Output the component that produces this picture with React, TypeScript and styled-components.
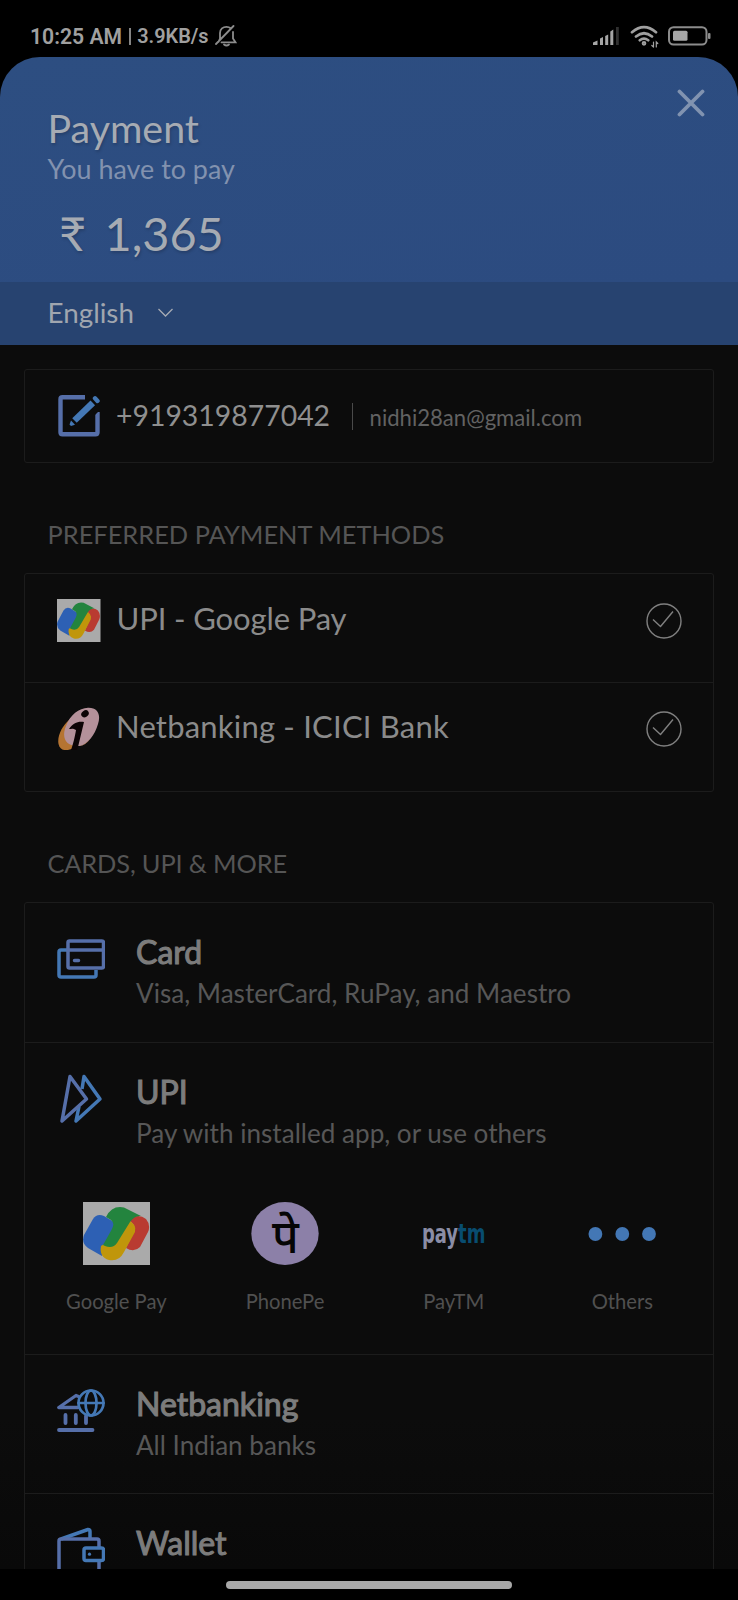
import React from "react";
import styled, { createGlobalStyle } from "styled-components";

const Global = createGlobalStyle`
  * { box-sizing: border-box; }
  body { margin: 0; background: #000; font-family: Lato, "Liberation Sans", sans-serif; }
  svg { display: block; flex: none; }
`;

const Screen = styled.div`
  width: 738px;
  height: 1600px;
  display: flex;
  flex-direction: column;
  overflow: hidden;
  background: #000;
`;

const StatusBar = styled.div`
  height: 57px;
  flex: none;
  display: flex;
  align-items: center;
  justify-content: space-between;
  padding: 15px 27px 0 30px;
  font-family: Roboto, sans-serif;
  font-weight: 600;
  color: #a0a0a0;
`;

const StatusGroup = styled.div<{ $gap: number }>`
  display: flex;
  align-items: center;
  gap: ${(p) => p.$gap}px;
`;

const StatusText = styled.span<{ $size: number }>`
  font-size: ${(p) => p.$size}px;
  white-space: nowrap;
`;

const StatusRule = styled.span`
  width: 2px;
  height: 17px;
  background: #858585;
`;

const Sheet = styled.main`
  height: 1511.5px;
  flex: none;
  overflow: hidden;
  border-radius: 40px 40px 0 0;
  background: linear-gradient(#0c0c0c 90%, #090909);
`;

const Header = styled.header`
  height: 225px;
  display: flex;
  justify-content: space-between;
  padding: 47px 33px 0 47.5px;
  background: linear-gradient(170deg, #2d4e81, #2c4b80);
`;

const CloseButton = styled.button`
  width: 28px;
  height: 28px;
  margin-top: -15px;
  padding: 0;
  border: 0;
  background: none;
`;

const Title = styled.h1`
  margin: 0;
  font-weight: 400;
  font-size: 39.4px;
  line-height: 48px;
  color: #a6abb3;
  text-shadow: 1px 2px 3px rgba(0, 0, 0, 0.18);
`;

const Caption = styled.div`
  font-size: 26.9px;
  line-height: 34px;
  color: #8292af;
`;

const Amount = styled.div`
  display: flex;
  gap: 18.5px;
  margin: 20px 0 0 11.5px;
  font-size: 46.8px;
  line-height: 55px;
  color: #a6abb3;
  text-shadow: 1px 2px 3px rgba(0, 0, 0, 0.18);
`;

const LanguageBar = styled.div`
  height: 62.5px;
  display: flex;
  align-items: center;
  gap: 24.5px;
  padding: 0 0 1px 47.5px;
  background: #274370;
  font-size: 27.8px;
  color: #a0a6af;
`;

const Panel = styled.section<{ $top: number }>`
  margin: ${(p) => p.$top}px 24px 0 24px;
  border: 1.5px solid #1c1c1c;
  border-radius: 3px;
`;

const ContactRow = styled.div`
  height: 92px;
  display: flex;
  align-items: center;
  padding-left: 32.5px;
`;

const Phone = styled.span`
  margin: -2px 0 0 16.5px;
  font-size: 28.4px;
  color: #8f8f8f;
`;

const Divider = styled.span`
  width: 1px;
  height: 27px;
  margin: 1px 16.5px 0 22px;
  background: #4a4a4a;
`;

const Email = styled.span`
  margin-top: 2px;
  font-size: 22.1px;
  color: #626262;
`;

const SectionTitle = styled.h2<{ $spacing?: number }>`
  margin: 56px 0 0 47.5px;
  font-weight: 400;
  font-size: 25.4px;
  line-height: 30px;
  letter-spacing: ${(p) => p.$spacing ?? 0}px;
  color: #555;
`;

const SavedMethod = styled.div`
  height: 107.5px;
  display: flex;
  align-items: flex-start;
  padding: 25px 31px 0 32px;
  & + & {
    height: 109.5px;
    padding-top: 24px;
    border-top: 1.5px solid #1c1c1c;
  }
`;

const SavedName = styled.span<{ $spacing: number }>`
  flex: 1;
  margin: -1px 0 0 16px;
  font-size: 31px;
  line-height: 40px;
  letter-spacing: ${(p) => p.$spacing}px;
  color: #8b8b8b;
`;

const CheckSlot = styled.div`
  padding-top: 4px;
`;

const Method = styled.div<{ $height: number }>`
  height: ${(p) => p.$height}px;
  & + & { border-top: 1.5px solid #1c1c1c; }
`;

const MethodHead = styled.div`
  display: flex;
  padding: 29px 0 0 32px;
`;

const IconSlot = styled.div<{ $top: number }>`
  width: 79px;
  padding-top: ${(p) => p.$top}px;
`;

const MethodName = styled.div`
  font-size: 32px;
  line-height: 40px;
  color: #7c7c7c;
  -webkit-text-stroke: 1.1px #7c7c7c;
`;

const MethodNote = styled.div`
  font-size: 26.1px;
  line-height: 42px;
  color: #575757;
`;

const AppGrid = styled.div`
  display: grid;
  grid-template-columns: repeat(4, 168.7px);
  margin: 48px 0 0 7px;
`;

const AppTile = styled.div`
  display: flex;
  flex-direction: column;
  align-items: center;
  gap: 24px;
  font-size: 20.2px;
  line-height: 24px;
  color: #505050;
`;

const NavBar = styled.div`
  flex: 1;
  display: flex;
  justify-content: center;
  padding-top: 12.5px;
`;

const HomeHandle = styled.div`
  width: 286px;
  height: 8px;
  border-radius: 4px;
  background: #a8a8a8;
`;

const BLUE = "#4478b5";
const INDIGO = "#566fa9";

const BellOff = () => (
  <svg width="22" height="22" viewBox="0 0 22 22" fill="none" stroke="#8c8c8c" strokeWidth="1.8" strokeLinecap="round">
    <path d="M3.500 16.800 5 13.500V8C5 4 8 1.800 11.500 1.800c1.800 0 3.200.600 4.200 1.600M18 7v6.500l2.500 3.800H6.500M1 19 18.500 1" />
    <path d="M9 19.500q2.500 2 5 0" />
  </svg>
);

const Signal = () => (
  <svg width="28" height="20" viewBox="0 0 28 20" fill="#a6a6a6">
    <path d="M1 19v-2.500l4.500-2V19zM8 19v-6.500l3-1.500v8zM13.200 19v-9l3-1.500V19zM18.300 19V5.500l3-2V19z" />
    <path d="M24 1h2.800v18H24z" fill="#303030" />
  </svg>
);

const Wifi = () => (
  <svg width="29" height="23" viewBox="0 0 29 23" fill="none" stroke="#a0a0a0" strokeWidth="2.700" strokeLinecap="round">
    <path d="M2 7.200Q14 -3 26 7.200M6 11.500q8-6.500 16 0M9.800 15.300q4.200-3.200 8.400 0" />
    <circle cx="14" cy="18.300" r="1" />
    <path d="M23.500 17v5M21.800 20.500l1.700 1.500M26.300 22v-5l1.500 1.500" strokeWidth="1.200" />
  </svg>
);

const Battery = () => (
  <svg width="43" height="20" viewBox="0 0 43 20">
    <rect x="1" y="1.200" width="37.500" height="17.300" rx="4.500" fill="none" stroke="#8c8c8c" strokeWidth="2" />
    <rect x="5" y="4.800" width="14.500" height="10" rx="1.500" fill="#a6a6a6" />
    <rect x="40" y="7" width="2.500" height="6" rx="1" fill="#8c8c8c" />
  </svg>
);

const GPay = ({ width, height }: { width: number; height: number }) => (
  <svg width={width} height={height} viewBox="0 0 67 63" preserveAspectRatio="none">
    <rect width="67" height="63" fill="#aaa" />
    <path d="M10 17Q14 11 21 14L31 20 31 30 22 48 19 54 5 46Q-2 41 1 33Z" fill="#2d60b4" />
    <path d="M47 19 50 15Q57 12 63 17 68 23 65 30L57 45Q51 51 43 46L50 31Q54 24 47 19Z" fill="#b93b31" />
    <path d="M45 18Q54 22 52 30L41 50Q36 60 26 58 16 55 18 44L24 40Z" fill="#c0960b" />
    <path d="M23 15Q29 3 41 5.500L58 14Q52 13 47 20L34 41Q30 47 22 44L20 43 29 27Q32 21 28 18Z" fill="#23843e" />
  </svg>
);

const Icici = () => (
  <svg width="43" height="43" viewBox="0 0 43 43">
    <path d="M13 12C5 19 0 29 1.500 37c1.500 7 8 7 13 5l13-6z" fill="#b57432" />
    <path d="M31 .800C41 .500 44 8 41 17c-3 11-11 21-18 22C9 40 4 31 9 19 13 8 22 1 31 .800" fill="#b4919a" />
    <path d="M22 39q6-1 11-7-5 7-11 7" fill="#b57432" />
    <ellipse cx="28" cy="6.800" rx="4" ry="3.200" transform="rotate(-35 28 6.800)" fill="#0c0405" />
    <path d="M12 22c4-6 9-8 15-7l-6 25-1 3h-6c2-5 4-14 5-20-3-2-5-1-7-1" fill="#0c0405" />
  </svg>
);

const EditIcon = () => (
  <svg width="42" height="42" viewBox="0 0 42 42" fill="none">
    <path d="M27 2.300H4.500q-2 0-2 2v33q0 2 2 2h33q2 0 2-2V17" stroke={INDIGO} strokeWidth="4.400" />
    <path d="M30 0h12v15l-5 5z" fill="#0c0c0c" />
    <path d="M16.500 25.500 34.800 7.800" stroke={BLUE} strokeWidth="6.500" />
    <path d="m13 25.500 4 4.200-4 1.300-1.500-1.500z" fill={BLUE} />
    <path d="m37 3.300 2.500 2.700" stroke={BLUE} strokeWidth="4.400" strokeLinecap="round" />
  </svg>
);

const Check = () => (
  <svg width="36" height="36" viewBox="0 0 36 36" fill="none" stroke="#808080" strokeWidth="1.400">
    <circle cx="18" cy="18" r="17" />
    <path d="m7 16.500 7.500 7L27 8.500" strokeLinejoin="round" />
  </svg>
);

const CardIcon = () => (
  <svg width="48" height="40" viewBox="0 0 48 40" fill="none" strokeWidth="3.500" strokeLinejoin="round">
    <path d="M10 11H4q-2 0-2 2v23q0 2 2 2h33q2 0 2-2v-5" stroke={BLUE} />
    <rect x="11" y="2" width="35.500" height="27" rx="1.500" stroke={INDIGO} />
    <path d="M11 11h35M17.500 21.500h4" stroke={INDIGO} strokeLinecap="round" />
  </svg>
);

const UpiIcon = () => (
  <svg width="48" height="50" viewBox="0 0 48 50" fill="none" strokeWidth="3.500" strokeLinejoin="round">
    <path d="m25 15 2-12.500 16 22.500-24 22 3-14.500" stroke={BLUE} />
    <path d="M13 2.500 29.500 25 5 47z" stroke={INDIGO} />
  </svg>
);

const BankIcon = () => (
  <svg width="48" height="44" viewBox="0 0 48 44" fill="none" strokeLinecap="round" strokeLinejoin="round">
    <path d="M21.500 7.500 19 6.500 1.800 18.500H21" stroke={INDIGO} strokeWidth="3.300" />
    <path d="M8.500 26v8M18.800 26v8M29 27v7M2 41h33.500" stroke={INDIGO} strokeWidth="3.800" />
    <g stroke={BLUE} strokeWidth="2.700">
      <circle cx="34" cy="14" r="12.500" />
      <ellipse cx="34" cy="14" rx="5.500" ry="12.500" />
      <path d="M21.500 14h25" />
    </g>
  </svg>
);

const WalletIcon = () => (
  <svg width="48" height="50" viewBox="0 0 48 50" fill="none" strokeWidth="3.500" strokeLinejoin="round">
    <path d="M4 12 31 2.500q2 0 2 2V12" stroke={BLUE} />
    <path d="M42 20v-6q0-2-2-2H4q-2 0-2 2v28q0 4 4 4h34q2 0 2-2v-9" stroke={INDIGO} />
    <rect x="27" y="21" width="19.500" height="12.500" rx="2" stroke={BLUE} />
    <circle cx="32.500" cy="27.200" r="1.600" fill={BLUE} />
  </svg>
);

const PhonePe = () => (
  <svg width="68" height="63" viewBox="0 0 68 63">
    <ellipse cx="34" cy="31.500" rx="33.700" ry="31.500" fill="#8c80a8" />
    <text x="34.500" y="51" textAnchor="middle" fontFamily='"Noto Sans", sans-serif' fontWeight="500" fontSize="46" fill="#050505">पे</text>
  </svg>
);

const PaytmMark = styled.div`
  height: 63px;
  display: flex;
  align-items: center;
  font-family: "DejaVu Sans Condensed", "DejaVu Sans", sans-serif;
  font-stretch: condensed;
  font-weight: 700;
  font-size: 20px;
  line-height: 24px;
`;

const PaytmWord = styled.span`
  display: inline-block;
  color: #8b8da6;
  transform: scaleY(1.3);
`;

const PaytmAccent = styled.span`
  color: #084d70;
`;

const Paytm = () => (
  <PaytmMark>
    <PaytmWord>
      pay<PaytmAccent>tm</PaytmAccent>
    </PaytmWord>
  </PaytmMark>
);

const Dots = () => (
  <svg width="68" height="63" viewBox="0 0 68 63" fill="#4377b5">
    <circle cx="7.400" cy="32" r="6.900" />
    <circle cx="34.300" cy="32" r="6.900" />
    <circle cx="61" cy="32" r="6.900" />
  </svg>
);

const apps = [
  { label: "Google Pay", icon: <GPay width={67} height={63} /> },
  { label: "PhonePe", icon: <PhonePe /> },
  { label: "PayTM", icon: <Paytm /> },
  { label: "Others", icon: <Dots /> },
];

type MethodProps = {
  name: string;
  note?: string;
  icon: React.ReactNode;
  iconTop: number;
  height: number;
  children?: React.ReactNode;
};

const PaymentMethod = ({ name, note, icon, iconTop, height, children }: MethodProps) => (
  <Method $height={height}>
    <MethodHead>
      <IconSlot $top={iconTop}>{icon}</IconSlot>
      <div>
        <MethodName>{name}</MethodName>
        {note && <MethodNote>{note}</MethodNote>}
      </div>
    </MethodHead>
    {children}
  </Method>
);

export default function App() {
  return (
    <Screen>
      <Global />
      <StatusBar>
        <StatusGroup $gap={6.5}>
          <StatusText $size={21.2}>10:25 AM</StatusText>
          <StatusRule />
          <StatusText $size={19.9}>3.9KB/s</StatusText>
          <BellOff />
        </StatusGroup>
        <StatusGroup $gap={9.5}>
          <Signal />
          <Wifi />
          <Battery />
        </StatusGroup>
      </StatusBar>
      <Sheet>
        <Header>
          <div>
            <Title>Payment</Title>
            <Caption>You have to pay</Caption>
            <Amount>
              <span>₹</span>
              <span>1,365</span>
            </Amount>
          </div>
          <CloseButton aria-label="Close">
            <svg width="28" height="28" viewBox="0 0 28 28" stroke="#8193b0" strokeWidth="3.800" strokeLinecap="round">
              <path d="m2.500 2.500 23 23M25.500 2.500l-23 23" />
            </svg>
          </CloseButton>
        </Header>
        <LanguageBar>
          <span>English</span>
          <svg width="15" height="9" viewBox="0 0 15 9" fill="none" stroke="#a6abb4" strokeWidth="1.300">
            <path d="m.5 1 7 7 7-7" />
          </svg>
        </LanguageBar>
        <Panel $top={24.5}>
          <ContactRow>
            <EditIcon />
            <Phone>+919319877042</Phone>
            <Divider />
            <Email>nidhi28an@gmail.com</Email>
          </ContactRow>
        </Panel>
        <SectionTitle>PREFERRED PAYMENT METHODS</SectionTitle>
        <Panel $top={24}>
          <SavedMethod>
            <GPay width={43.5} height={43} />
            <SavedName $spacing={-0.12}>UPI - Google Pay</SavedName>
            <CheckSlot><Check /></CheckSlot>
          </SavedMethod>
          <SavedMethod>
            <Icici />
            <SavedName $spacing={0.2}>Netbanking - ICICI Bank</SavedName>
            <CheckSlot><Check /></CheckSlot>
          </SavedMethod>
        </Panel>
        <SectionTitle $spacing={-0.15}>CARDS, UPI &amp; MORE</SectionTitle>
        <Panel $top={24}>
          <PaymentMethod name="Card" note="Visa, MasterCard, RuPay, and Maestro" icon={<CardIcon />} iconTop={7} height={139} />
          <PaymentMethod name="UPI" note="Pay with installed app, or use others" icon={<UpiIcon />} iconTop={2} height={311.5}>
            <AppGrid>
              {apps.map((a) => (
                <AppTile key={a.label}>
                  {a.icon}
                  {a.label}
                </AppTile>
              ))}
            </AppGrid>
          </PaymentMethod>
          <PaymentMethod name="Netbanking" note="All Indian banks" icon={<BankIcon />} iconTop={5} height={139} />
          <PaymentMethod name="Wallet" icon={<WalletIcon />} iconTop={4} height={139} />
        </Panel>
      </Sheet>
      <NavBar>
        <HomeHandle />
      </NavBar>
    </Screen>
  );
}
